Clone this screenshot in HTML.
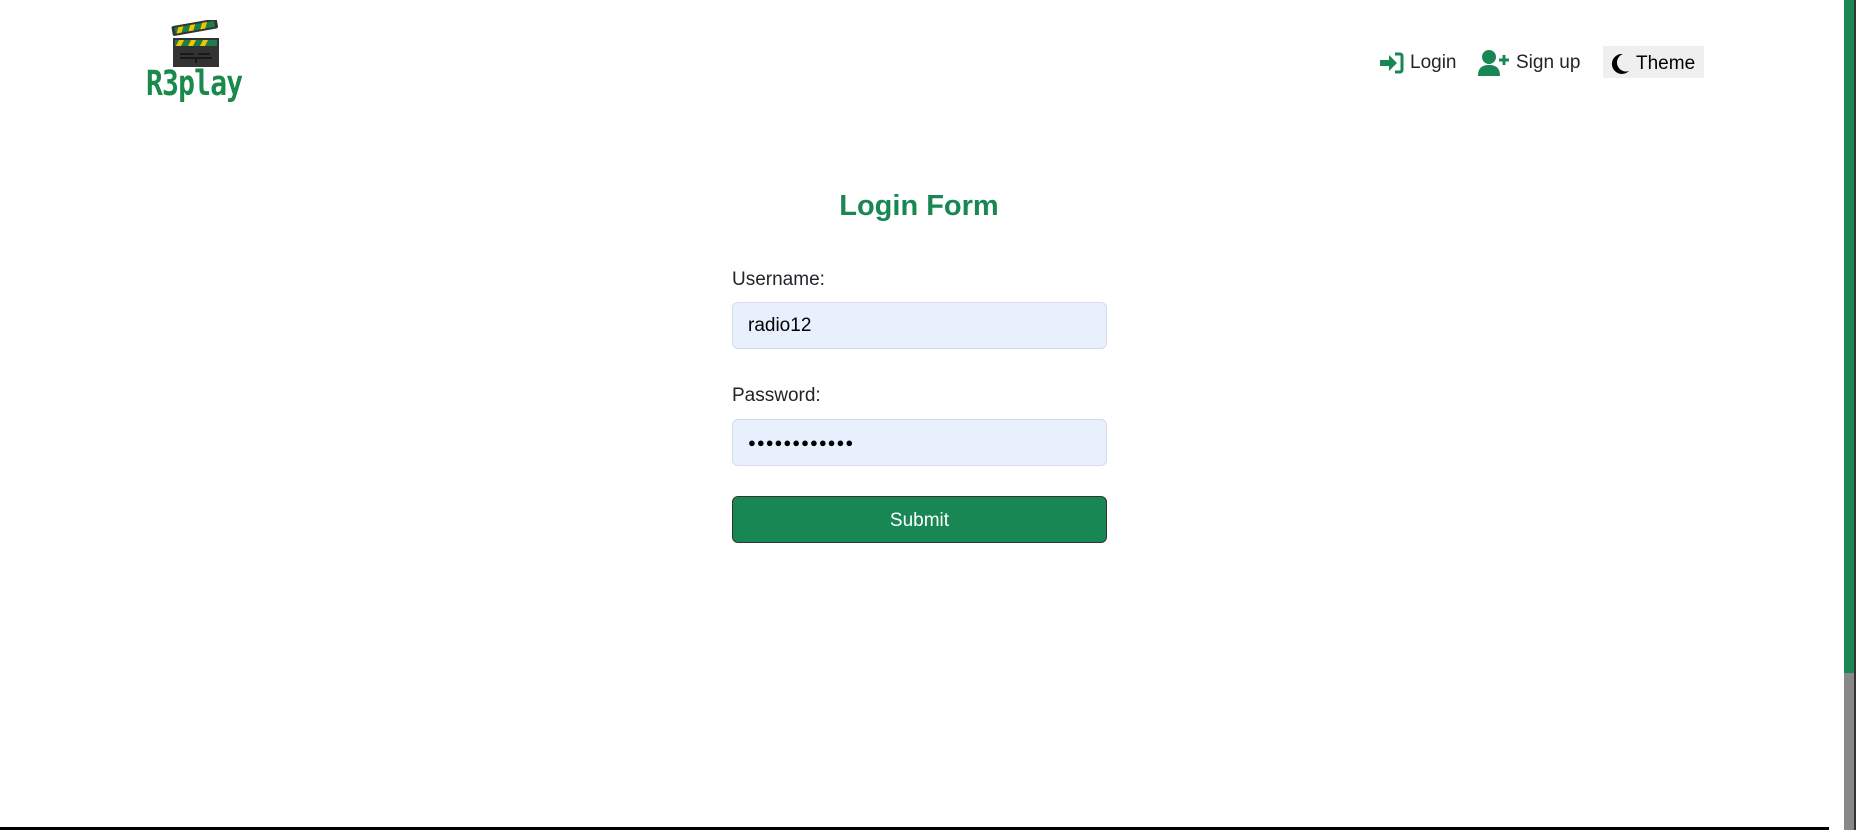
<!DOCTYPE html>
<html><head><meta charset="utf-8"><style>
*{box-sizing:border-box;margin:0;padding:0}
html,body{width:1856px;height:830px;overflow:hidden;background:#fff;font-family:"Liberation Sans",sans-serif;color:#212529}
.abs{position:absolute}
.nav{font-size:19px;color:#212529;display:flex;align-items:center}
.lbl{position:absolute;left:732px;font-size:19px;color:#212529}
.inp{position:absolute;left:732px;width:375px;height:47px;background:#e8f0fe;border:1px solid #d6dce6;border-radius:6px;font-size:19px;color:#000;padding-left:15px;line-height:45px}
</style></head><body>
<!-- logo -->
<svg class="abs" style="left:170px;top:20px" width="52" height="48" viewBox="0 0 52 48">
<g transform="rotate(-10 4 16)"><rect x="3" y="6" width="46" height="10" rx="2" fill="#333"/>
<rect x="6" y="8" width="40" height="6" fill="#1a7f4a"/>
<path d="M10 8h5l-3 6h-5zM22 8h5l-3 6h-5zM34 8h5l-3 6h-5z" fill="#f2c500"/></g>
<rect x="3" y="18" width="46" height="10" fill="#333"/>
<rect x="5" y="20" width="42" height="6" fill="#1a7f4a"/>
<path d="M9 20h5l-3 6h-5zM21 20h5l-3 6h-5zM33 20h5l-3 6h-5z" fill="#f2c500"/>
<rect x="3" y="28" width="46" height="19" fill="#333"/>
<path d="M10 34h14M10 38h32M28 34h12M26 38v5" stroke="#111" stroke-width="1.5"/>
</svg>
<div class="abs" style="left:146px;top:64px;font-size:35px;font-weight:bold;color:#1a8a4c;letter-spacing:-1px;font-family:'DejaVu Sans Mono','Liberation Mono',monospace;transform:scaleX(0.8);transform-origin:left">R3play</div>
<!-- nav -->
<div class="abs nav" style="left:1379px;top:51px">
<svg width="26" height="24" viewBox="0 0 26 24"><path d="M1 9h9V4l8 8-8 8v-5H1z" fill="#198754"/><path d="M16 3h5a2 2 0 0 1 2 2v14a2 2 0 0 1-2 2h-5" fill="none" stroke="#198754" stroke-width="3"/></svg>
<span style="margin-left:5px">Login</span></div>
<div class="abs nav" style="left:1478px;top:49px">
<svg width="32" height="28" viewBox="0 0 32 28"><circle cx="11" cy="8" r="7" fill="#198754"/><path d="M0 27c0-8 4-11 11-11s11 3 11 11z" fill="#198754"/><path d="M26 6v10M21 11h10" stroke="#198754" stroke-width="3"/></svg>
<span style="margin-left:6px">Sign up</span></div>
<div class="abs nav" style="left:1603px;top:46px;width:101px;height:32px;background:#efefef;padding-left:7px;padding-top:3px">
<svg width="20" height="22" viewBox="0 0 20 22"><path d="M13 1A10 10 0 1 0 19 18 8.5 8.5 0 0 1 13 1z" fill="#000"/></svg>
<span style="margin-left:6px;color:#000">Theme</span></div>
<!-- form -->
<div class="abs" style="left:0;width:1838px;top:190px;text-align:center;font-size:29px;font-weight:bold;color:#198754">Login Form</div>
<div class="lbl" style="top:269px">Username:</div>
<div class="inp" style="top:302px">radio12</div>
<div class="lbl" style="top:385px">Password:</div>
<div class="inp" style="top:419px;font-size:13px;letter-spacing:1px">●●●●●●●●●●●●</div>
<div class="abs" style="left:732px;top:496px;width:375px;height:47px;background:#198754;border:1px solid #333;border-radius:6px;color:#fff;font-size:19px;text-align:center;line-height:47px">Submit</div>
<!-- bottom line -->
<div class="abs" style="left:0;top:827px;width:1829px;height:3px;background:#000"></div>
<!-- scrollbar -->
<div class="abs" style="left:1844px;top:0;width:10px;height:673px;background:#198754"></div>
<div class="abs" style="left:1844px;top:673px;width:10px;height:157px;background:#888"></div>
<div class="abs" style="left:1854px;top:0;width:2px;height:830px;background:#333"></div>
</body></html>
